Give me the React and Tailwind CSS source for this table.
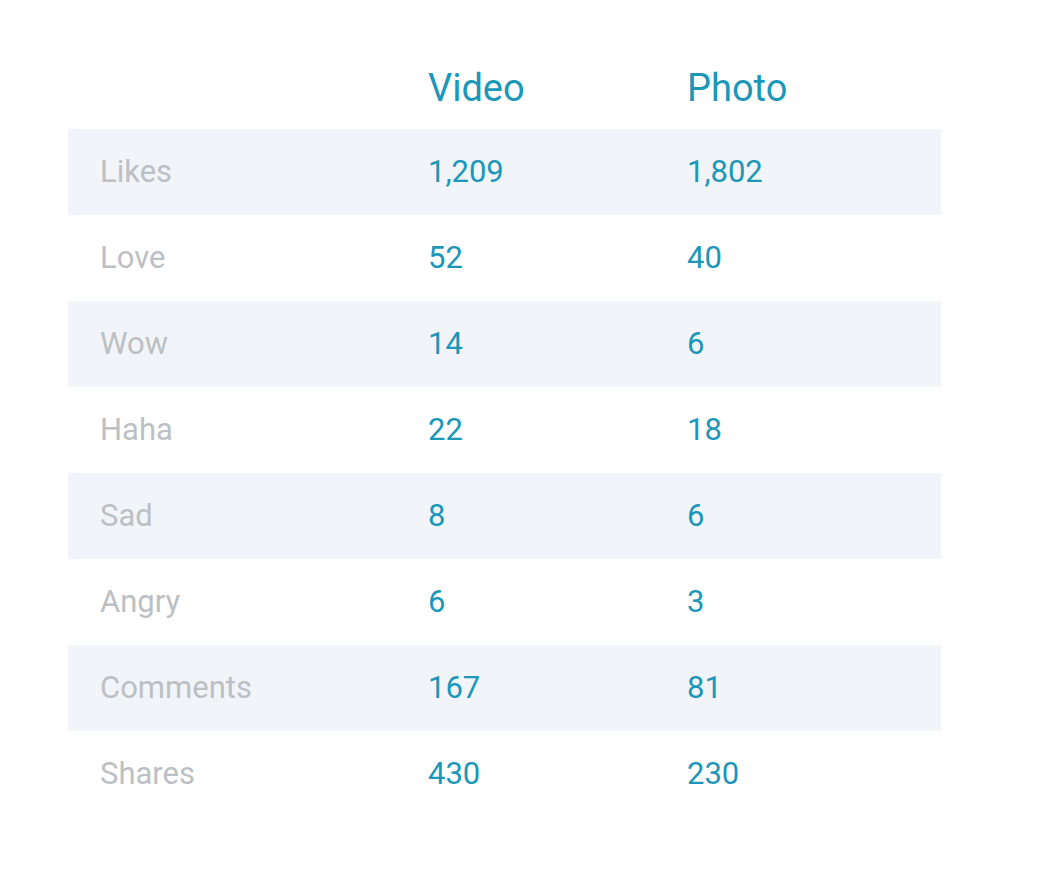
const rows = [
  ["Likes", "1,209", "1,802"],
  ["Love", "52", "40"],
  ["Wow", "14", "6"],
  ["Haha", "22", "18"],
  ["Sad", "8", "6"],
  ["Angry", "6", "3"],
  ["Comments", "167", "81"],
  ["Shares", "430", "230"],
];

export default function App() {
  return (
    <div
      className="min-h-[891px] bg-white pt-[69px]"
      style={{ fontFamily: "Roboto, 'Liberation Sans', sans-serif" }}
    >
      <div className="ml-[68px] w-[873px]">
        {/* header */}
        <div className="grid grid-cols-[360px_259px_1fr] pb-[22px] text-[38px] leading-[38px] text-[#1b97b9]">
          <div />
          <div>Video</div>
          <div>Photo</div>
        </div>

        {rows.map(([label, video, photo], i) => (
          <div
            key={label}
            className={
              "grid h-[86px] grid-cols-[360px_259px_1fr] items-center text-[31px] " +
              (i % 2 === 0 ? "bg-[#f1f5f9]" : "bg-white")
            }
          >
            <div className="pl-8 text-[#bcbfc3]">{label}</div>
            <div className="text-[#1b97b9]">{video}</div>
            <div className="text-[#1b97b9]">{photo}</div>
          </div>
        ))}
      </div>
    </div>
  );
}
